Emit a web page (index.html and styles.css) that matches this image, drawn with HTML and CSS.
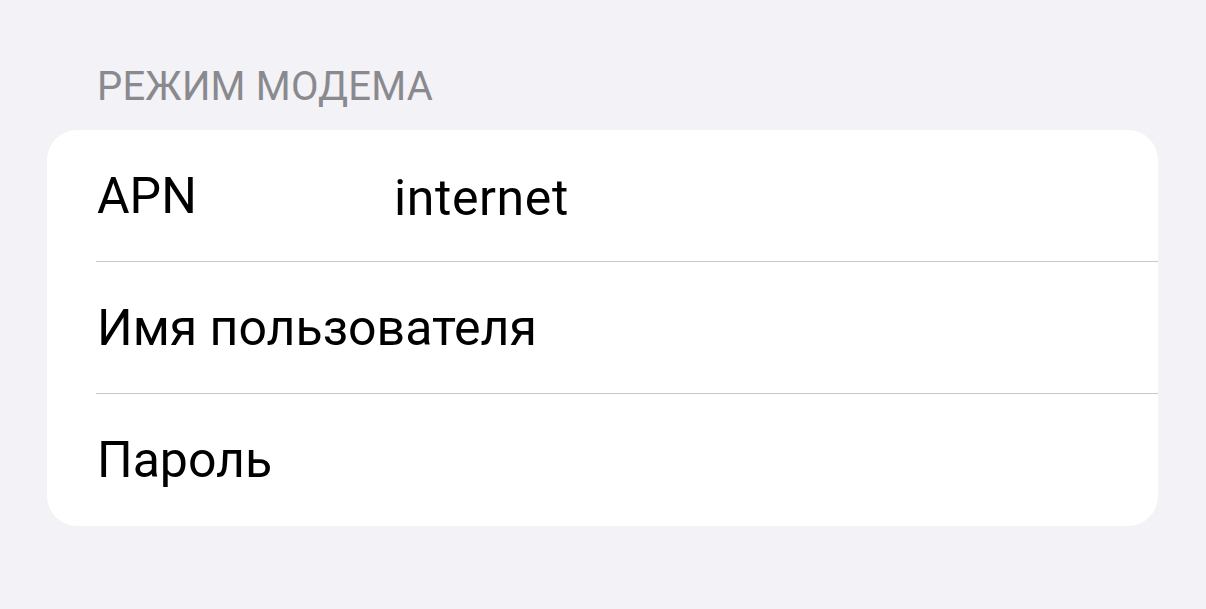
FILE: index.html
```html
<!DOCTYPE html>
<html lang="ru">
<head>
    <meta charset="UTF-8">
    <meta name="viewport" content="width=device-width, initial-scale=1.0">
    <title>Режим модема</title>
    <link rel="stylesheet" href="styles.css">
</head>
<body>
    <div class="section">
        <div class="section-header">Режим модема</div>
        <div class="card">
            <div class="row">
                <span class="label">APN</span>
                <span class="value">internet</span>
            </div>
            <div class="row">
                <span class="label">Имя пользователя</span>
            </div>
            <div class="row last">
                <span class="label">Пароль</span>
            </div>
        </div>
    </div>
</body>
</html>
```

FILE: styles.css
```css
body {
    margin: 0;
    background-color: #f2f2f7;
    font-family: Roboto, "Liberation Sans", sans-serif;
    color: #000;
}
.section {
    padding: 64px 48px 0 47px;
}
.section-header {
    padding-left: 50px;
    font-size: 40px;
    line-height: 46px;
    letter-spacing: 0.2px;
    text-transform: uppercase;
    color: #8a8a8e;
    margin-bottom: 20px;
}
.card {
    background-color: #fff;
    border-radius: 30px;
    overflow: hidden;
}
.row {
    margin-left: 49px;
    height: 131px;
    border-bottom: 1px solid #c8c8cc;
    display: flex;
    align-items: center;
    font-size: 50px;
    white-space: nowrap;
}
.row.last {
    height: 132px;
    border-bottom: none;
}
.label {
    flex-shrink: 0;
    min-width: 297px;
    padding-left: 1px;
}
.value {
    padding-top: 4px;
    letter-spacing: 0.6px;
}
```
